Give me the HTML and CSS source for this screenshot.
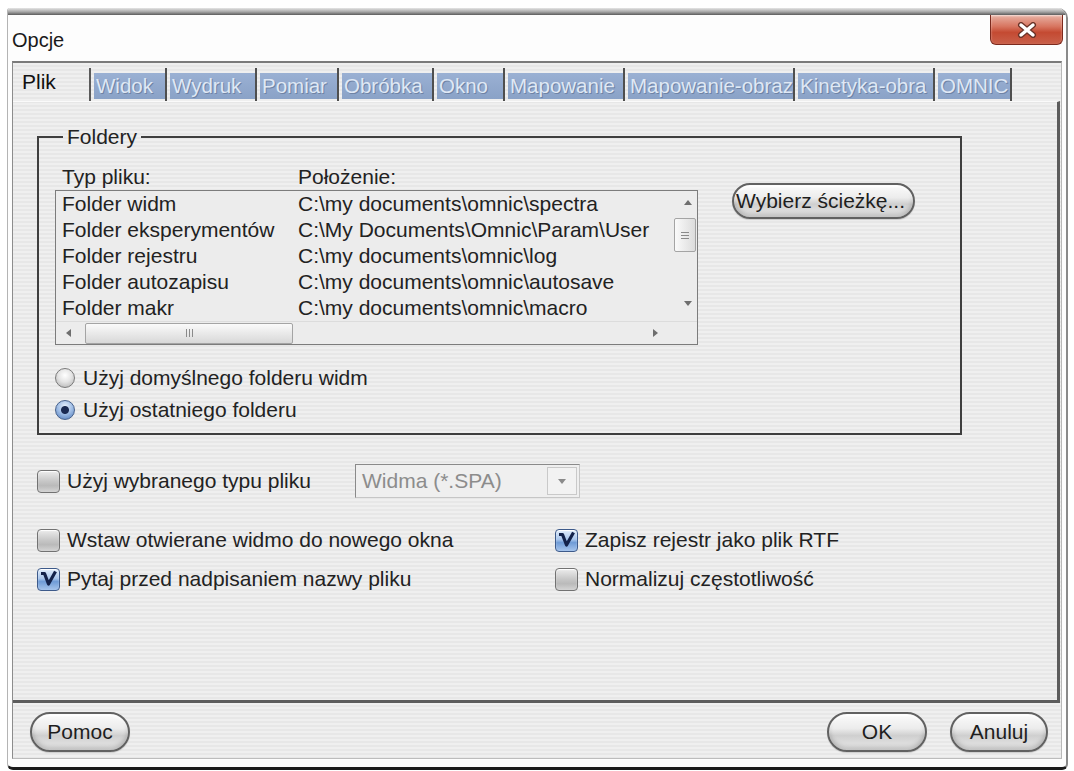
FILE: index.html
```html
<!DOCTYPE html>
<html lang="pl">
<head>
<meta charset="utf-8">
<title>Opcje</title>
<link rel="stylesheet" href="styles.css">
</head>
<body>
<div class="window">
  <div class="frame-top"></div>
  <div class="titlebar">
    <span class="title">Opcje</span>
    <button class="close" aria-label="Zamknij">
      <svg viewBox="0 0 22 16" width="22" height="16">
        <path d="M5 3 L17 13 M17 3 L5 13" stroke="#6a3328" stroke-width="6" stroke-linecap="round" fill="none"/>
        <path d="M5 3 L17 13 M17 3 L5 13" stroke="#ffffff" stroke-width="3.4" stroke-linecap="round" fill="none"/>
      </svg>
    </button>
  </div>

  <div class="client">
    <div class="tabs">
      <div class="tab active">Plik</div>
      <div class="tab t-widok"><span class="lab">Widok</span></div>
      <div class="tab t-wydruk"><span class="lab">Wydruk</span></div>
      <div class="tab t-pomiar"><span class="lab">Pomiar</span></div>
      <div class="tab t-obrobka"><span class="lab">Obróbka</span></div>
      <div class="tab t-okno"><span class="lab">Okno</span></div>
      <div class="tab t-map"><span class="lab">Mapowanie</span></div>
      <div class="tab t-mapobr"><span class="lab">Mapowanie-obraz</span></div>
      <div class="tab t-kin"><span class="lab">Kinetyka-obra</span></div>
      <div class="tab t-omnic"><span class="lab">OMNIC</span></div>
    </div>

    <div class="panel">
      <fieldset class="group">
        <legend>Foldery</legend>
        <div class="group-body">
          <div class="folders">
            <div class="cols">
              <span class="col-type">Typ pliku:</span>
              <span>Położenie:</span>
            </div>
            <div class="listbox">
              <div class="list-main">
                <div class="rows">
                  <div class="row"><span class="cell-type">Folder widm</span><span>C:\my documents\omnic\spectra</span></div>
                  <div class="row"><span class="cell-type">Folder eksperymentów</span><span>C:\My Documents\Omnic\Param\User</span></div>
                  <div class="row"><span class="cell-type">Folder rejestru</span><span>C:\my documents\omnic\log</span></div>
                  <div class="row"><span class="cell-type">Folder autozapisu</span><span>C:\my documents\omnic\autosave</span></div>
                  <div class="row"><span class="cell-type">Folder makr</span><span>C:\my documents\omnic\macro</span></div>
                </div>
                <div class="vscroll">
                  <span class="arrow-box">
                    <svg viewBox="0 0 8 5" width="8" height="5"><path d="M0 5 L4 0 L8 5 Z" fill="#6e6e6e"/></svg>
                  </span>
                  <span class="vthumb">
                    <svg viewBox="0 0 8 7" width="8" height="7"><path d="M0 0.5 H8 M0 3.5 H8 M0 6.5 H8" stroke="#8a8a8a" stroke-width="1"/></svg>
                  </span>
                  <span class="vfill"></span>
                  <span class="arrow-box">
                    <svg viewBox="0 0 8 5" width="8" height="5"><path d="M0 0 L8 0 L4 5 Z" fill="#6e6e6e"/></svg>
                  </span>
                </div>
              </div>
              <div class="hscroll">
                <span class="harrow left">
                  <svg viewBox="0 0 5 8" width="5" height="8"><path d="M5 0 L0 4 L5 8 Z" fill="#6e6e6e"/></svg>
                </span>
                <span class="hthumb">
                  <svg viewBox="0 0 7 8" width="7" height="8"><path d="M0.5 0 V8 M3.5 0 V8 M6.5 0 V8" stroke="#8a8a8a" stroke-width="1"/></svg>
                </span>
                <span class="hfill"></span>
                <span class="harrow right">
                  <svg viewBox="0 0 5 8" width="5" height="8"><path d="M0 0 L5 4 L0 8 Z" fill="#6e6e6e"/></svg>
                </span>
                <span class="corner"></span>
              </div>
            </div>
            <div class="radios">
              <label class="radio-row"><span class="radio"></span>Użyj domyślnego folderu widm</label>
              <label class="radio-row"><span class="radio on"></span>Użyj ostatniego folderu</label>
            </div>
          </div>
          <button class="pill browse">Wybierz ścieżkę...</button>
        </div>
      </fieldset>

      <div class="filetype">
        <label class="check wide"><span class="box"></span>Użyj wybranego typu pliku</label>
        <div class="combo">
          <span>Widma (*.SPA)</span>
          <span class="drop">
            <svg viewBox="0 0 8 5" width="8" height="5"><path d="M0 0 L8 0 L4 5 Z" fill="#8a8a8a"/></svg>
          </span>
        </div>
      </div>

      <div class="options">
        <label class="check"><span class="box"></span>Wstaw otwierane widmo do nowego okna</label>
        <label class="check"><span class="box on">
          <svg viewBox="0 0 23 23" width="23" height="23"><path d="M4 5.5 H7.5 L11.5 16 L18.5 3.5" stroke="#13224a" stroke-width="3.2" fill="none" stroke-linejoin="round"/></svg>
        </span>Zapisz rejestr jako plik RTF</label>
        <label class="check"><span class="box on">
          <svg viewBox="0 0 23 23" width="23" height="23"><path d="M4 5.5 H7.5 L11.5 16 L18.5 3.5" stroke="#13224a" stroke-width="3.2" fill="none" stroke-linejoin="round"/></svg>
        </span>Pytaj przed nadpisaniem nazwy pliku</label>
        <label class="check"><span class="box"></span>Normalizuj częstotliwość</label>
      </div>
    </div>

    <div class="footer">
      <button class="pill help">Pomoc</button>
      <span class="spacer"></span>
      <button class="pill ok">OK</button>
      <button class="pill cancel">Anuluj</button>
    </div>
  </div>
</div>
</body>
</html>
```

FILE: styles.css
```css
* {
  box-sizing: border-box;
}

html,
body {
  margin: 0;
  padding: 0;
  background: #ffffff;
}

body {
  width: 1074px;
  height: 771px;
  overflow: hidden;
  font-family: "Liberation Sans", Arial, sans-serif;
  font-size: 21px;
  color: #222222;
}

/* dialog frame */
.window {
  margin: 8px 0 0 7px;
  width: 1061px;
  height: 762px;
  display: flex;
  flex-direction: column;
  background: #fdfdfd;
  border-left: 1px solid #b4b4b4;
  border-right: 2px solid #8a8a8a;
  border-bottom: 3px solid #1b1b1b;
  border-radius: 3px 10px 6px 6px;
  overflow: hidden;
}

.frame-top {
  flex: none;
  height: 7px;
  background: linear-gradient(#e6e6e6, #a6a6a6 55%, #5c5c5c);
}

.titlebar {
  flex: none;
  height: 46px;
  display: flex;
  align-items: flex-start;
  justify-content: space-between;
  background: #fdfdfd;
}

.title {
  margin: 13px 0 0 4px;
  font-size: 20px;
  line-height: 24px;
  color: #1a1a1a;
}

.close {
  width: 73px;
  height: 30px;
  margin-right: 3px;
  padding: 0;
  display: flex;
  align-items: center;
  justify-content: center;
  border: 1px solid #7c2a1e;
  border-top: none;
  border-radius: 0 0 6px 6px;
  background: linear-gradient(#e8b2a4, #d7745f 40%, #c44a32 60%, #c9604a);
  box-shadow: inset 0 1px 2px rgba(255, 255, 255, 0.6);
}

/* client area */
.client {
  flex: 1;
  margin: 0 4px 8px 4px;
  display: flex;
  flex-direction: column;
  border-top: 2px solid #7b7b7b;
  border-left: 1px solid #8c8c8c;
  border-right: 1px solid #b8b8b8;
  border-bottom: 1px solid #bcbcbc;
  background: repeating-linear-gradient(180deg, #efefef 0, #efefef 2px, #e7e7e7 2px, #e7e7e7 4px);
}

/* tab strip */
.tabs {
  flex: none;
  height: 38px;
  display: flex;
  align-items: flex-start;
  font-size: 20.5px;
}

.tab {
  flex: none;
  height: 33px;
  margin-top: 5px;
  padding-left: 3px;
  border-right: 2px solid #4f4f4f;
  white-space: nowrap;
}

.tab.active {
  width: 78px;
  padding: 2px 0 0 9px;
  font-size: 21px;
  line-height: 24px;
  color: #111111;
  border-right-color: #5a5a5a;
}

.tab .lab {
  display: block;
  height: 26px;
  margin-top: 5px;
  padding-left: 2px;
  overflow: hidden;
  line-height: 26px;
  color: #dfe8f5;
  text-shadow: 1px 1px 0 #6f83a5;
  background: linear-gradient(#9ab0d3, #8aa2c7);
}

.t-widok { width: 76px; }
.t-wydruk { width: 90px; }
.t-pomiar { width: 82px; }
.t-obrobka { width: 95px; }
.t-okno { width: 71px; }
.t-map { width: 120px; }
.t-mapobr { width: 170px; }
.t-kin { width: 140px; }
.t-omnic { width: 77px; }

/* page body */
.panel {
  flex: none;
  height: 602px;
  margin-right: 1px;
  border-top: 1px solid #fafafa;
  border-right: 3px solid #5c5c5c;
  border-bottom: 3px solid #5c5c5c;
}

.group {
  margin: 23px 0 0 24px;
  width: 925px;
  min-width: 0;
  padding: 17px 0 7px 16px;
  border: 2px solid #3f3f3f;
}

.group legend {
  margin-left: 8px;
  padding: 0 4px;
  line-height: 23px;
}

.group-body {
  display: flex;
  align-items: flex-start;
}

.folders {
  width: 643px;
  flex: none;
}

.cols {
  display: flex;
  height: 23px;
  line-height: 23px;
}

.col-type {
  width: 243px;
  padding-left: 7px;
}

/* folder list */
.listbox {
  margin-top: 2px;
  height: 155px;
  display: flex;
  flex-direction: column;
  border: 1px solid #7c7c7c;
  background: #ececec;
}

.list-main {
  display: flex;
  height: 130px;
}

.rows {
  flex: 1;
  overflow: hidden;
}

.row {
  display: flex;
  height: 26px;
  line-height: 26px;
  white-space: nowrap;
}

.cell-type {
  width: 242px;
  flex: none;
  padding-left: 6px;
}

.vscroll {
  width: 25px;
  flex: none;
  display: flex;
  flex-direction: column;
  align-items: center;
  padding-bottom: 7px;
}

.arrow-box {
  height: 22px;
  display: flex;
  align-items: center;
  justify-content: center;
  padding-left: 6px;
}

.vthumb {
  margin-top: 5px;
  width: 22px;
  height: 34px;
  display: flex;
  align-items: center;
  justify-content: center;
  border: 1px solid #a4a4a4;
  border-radius: 2px;
  background: linear-gradient(90deg, #fafafa, #dcdcdc);
}

.vfill {
  flex: 1;
}

.hscroll {
  height: 23px;
  display: flex;
  align-items: center;
  border-top: 1px solid #dcdcdc;
}

.harrow {
  height: 100%;
  display: flex;
  align-items: center;
  justify-content: center;
}

.harrow.left {
  width: 24px;
}

.harrow.right {
  width: 20px;
  margin-right: 7px;
}

.hthumb {
  margin-left: 5px;
  width: 208px;
  height: 21px;
  display: flex;
  align-items: center;
  justify-content: center;
  border: 1px solid #a4a4a4;
  border-radius: 2px;
  background: linear-gradient(#fafafa, #d8d8d8);
}

.hfill {
  flex: 1;
}

.corner {
  width: 25px;
  height: 100%;
}

/* radio buttons */
.radios {
  margin-top: 17px;
}

.radio-row {
  height: 32px;
  display: flex;
  align-items: center;
  gap: 8px;
  white-space: nowrap;
}

.radio {
  width: 20px;
  height: 20px;
  flex: none;
  border-radius: 50%;
  border: 1px solid #7a7a7a;
  background: radial-gradient(circle at 50% 35%, #ffffff 0, #e4e4e4 45%, #acacac 100%);
}

.radio.on {
  border-color: #48628c;
  background:
    radial-gradient(circle at 50% 50%, #1a2a52 0, #1a2a52 3.5px, transparent 4.5px),
    radial-gradient(circle at 50% 30%, #e6f0fc 0, #9dbbe4 50%, #4d78b8 100%);
}

/* push buttons */
.pill {
  font-family: inherit;
  font-size: 21px;
  color: #1e1e1e;
  height: 40px;
  padding: 0;
  border: 2px solid #616161;
  border-radius: 20px;
  background: linear-gradient(#fbfbfb, #ececec 40%, #cfcfcf 60%, #e2e2e2 88%, #efefef);
  box-shadow: inset 0 -3px 4px rgba(0, 0, 0, 0.2), inset 0 2px 2px #ffffff, 0 1px 1px rgba(0, 0, 0, 0.15);
}

.browse {
  flex: none;
  margin: 18px 0 0 34px;
  width: 183px;
  height: 36px;
  padding-left: 2px;
  text-align: left;
  white-space: nowrap;
  overflow: visible;
}

/* checkboxes */
.check {
  display: flex;
  align-items: center;
  gap: 7px;
  height: 30px;
  white-space: nowrap;
}

.box {
  width: 23px;
  height: 23px;
  flex: none;
  border: 1px solid #727272;
  border-radius: 4px;
  background: linear-gradient(#ececec, #c6c6c6 50%, #bababa 70%, #d4d4d4);
  box-shadow: inset 0 1px 1px #ffffff;
}

.box.on {
  border-color: #3d5a8a;
  background: linear-gradient(#e2eefc, #a9c6ec 45%, #6f9bd6 60%, #a6c4ec);
}

.box.on svg {
  display: block;
  margin: -1px 0 0 -1px;
}

/* file type row */
.filetype {
  display: flex;
  align-items: center;
  height: 34px;
  margin: 29px 0 0 24px;
}

.check.wide {
  width: 318px;
}

.combo {
  width: 225px;
  height: 34px;
  display: flex;
  align-items: center;
  padding-left: 6px;
  color: #8c8c8c;
  border: 1px solid;
  border-color: #8a8a8a #c6c6c6 #c6c6c6 #8a8a8a;
  background: #efefef;
}

.combo .drop {
  margin-left: auto;
  margin-right: 2px;
  width: 30px;
  height: 28px;
  display: flex;
  align-items: center;
  justify-content: center;
  border: 1px solid #c9c9c9;
  background: #f2f2f2;
}

.options {
  display: grid;
  grid-template-columns: 518px auto;
  row-gap: 9px;
  margin: 27px 0 0 24px;
}

/* dialog buttons */
.footer {
  flex: 1;
  display: flex;
  align-items: flex-start;
  gap: 23px;
  padding: 9px 13px 0 17px;
}

.spacer {
  flex: 1;
}

.help,
.ok {
  width: 100px;
}

.cancel {
  width: 98px;
}
```
